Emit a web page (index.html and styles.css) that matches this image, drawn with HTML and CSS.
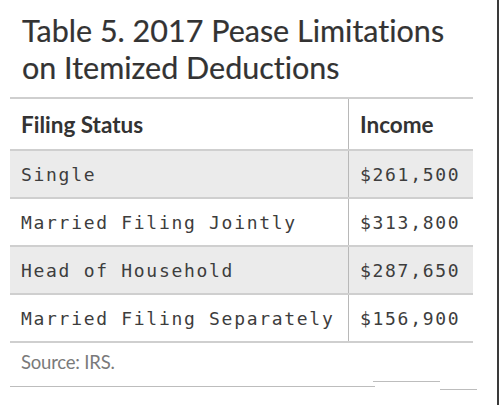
FILE: index.html
```html
<!DOCTYPE html>
<html>
<head>
<meta charset="utf-8">
<link rel="stylesheet" href="styles.css">
</head>
<body>
<div class="page">
  <h1 class="title">Table 5. 2017 Pease Limitations<br>on Itemized Deductions</h1>
  <table class="tbl">
    <thead>
      <tr><th class="c1">Filing Status</th><th class="c2">Income</th></tr>
    </thead>
    <tbody>
      <tr class="shade"><td class="c1">Single</td><td class="c2">$261,500</td></tr>
      <tr><td class="c1">Married Filing Jointly</td><td class="c2">$313,800</td></tr>
      <tr class="shade"><td class="c1">Head of Household</td><td class="c2">$287,650</td></tr>
      <tr><td class="c1">Married Filing Separately</td><td class="c2">$156,900</td></tr>
    </tbody>
  </table>
  <div class="source">Source: IRS.</div>
  <div class="rules">
    <span class="rule r1"></span>
    <span class="rule r2"></span>
    <span class="rule r3"></span>
  </div>
</div>
</body>
</html>
```
FILE: styles.css
```css
html, body {
  margin: 0;
  padding: 0;
  background: #fff;
}
.page {
  width: 497px;
  height: 405px;
  border-right: 2px solid #3a3a3a;
  box-sizing: content-box;
  padding-top: 12px;
}
.title {
  margin: 0 0 0 22px;
  font-family: Lato, "Open Sans", sans-serif;
  font-weight: 400;
  font-size: 30.5px;
  line-height: 37px;
  color: #333;
  height: 85px;
  font-variant-ligatures: none;
  -webkit-text-stroke: 0.2px #333;
}
.tbl {
  margin-left: 10px;
  width: 463px;
  border-collapse: collapse;
  border-top: 2px solid #cfcfcf;
}
.tbl th, .tbl td {
  padding: 0 0 0 11px;
  text-align: left;
  border-bottom: 2px solid #cfcfcf;
}
.tbl th {
  height: 50px;
  font-family: Lato, sans-serif;
  font-weight: 700;
  font-size: 22.5px;
  color: #333;
  font-variant-ligatures: none;
}
.tbl td {
  height: 46px;
  font-family: "DejaVu Sans Mono", monospace;
  font-size: 18px;
  letter-spacing: 1.7px;
  color: #3d3d3d;
}
.tbl .c1 {
  width: 327px;
  border-right: 1px solid #b8b8b8;
}
.tbl .c2 {
  padding-left: 11px;
}
.shade td {
  background: #ebebeb;
}
.source {
  margin-left: 21px;
  height: 43px;
  line-height: 38px;
  font-family: Lato, sans-serif;
  font-size: 18.5px;
  letter-spacing: -0.2px;
  color: #7a7a7a;
}
.rules {
  position: relative;
  height: 10px;
}
.rule {
  position: absolute;
  height: 1px;
  background: #bdbdbd;
}
.r1 { left: 10px; width: 365px; top: 0; }
.r2 { left: 373px; width: 67px; top: -5px; }
.r3 { left: 440px; width: 37px; top: 3px; }
```
